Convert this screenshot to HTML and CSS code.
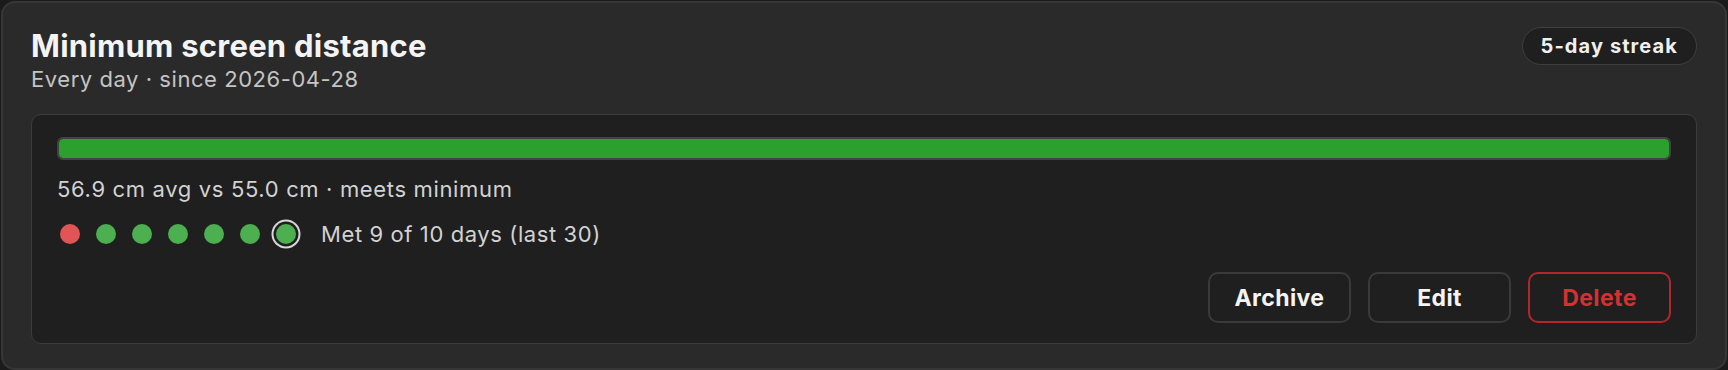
FILE: index.html
```html
<!DOCTYPE html>
<html lang="en">
<head>
  <meta charset="UTF-8">
  <meta name="viewport" content="width=device-width, initial-scale=1.0">
  <title>Goals - Minimum screen distance</title>
  <link rel="stylesheet" href="styles.css">
</head>

<body>
  <div class="goal-card">
    <div class="goal-head">
      <div class="goal-heading">
        <h2 class="goal-title">Minimum screen distance</h2>
        <p class="goal-meta">Every day · since 2026-04-28</p>
      </div>
      <span class="streak">5-day streak</span>
    </div>

    <div class="goal-panel">
      <div class="progress">
        <div class="progress-fill" style="width: 100%;"></div>
      </div>
      <p class="goal-stat">56.9 cm avg vs 55.0 cm · meets minimum</p>

      <div class="history">
        <span class="dot miss"></span>
        <span class="dot"></span>
        <span class="dot"></span>
        <span class="dot"></span>
        <span class="dot"></span>
        <span class="dot"></span>
        <span class="dot today"></span>
        <span class="history-label">Met 9 of 10 days (last 30)</span>
      </div>

      <div class="actions">
        <button class="btn">Archive</button>
        <button class="btn">Edit</button>
        <button class="btn btn-danger">Delete</button>
      </div>
    </div>
  </div>
</body>
</html>
```

FILE: styles.css
```css
body {
  font-family: "Inter", "Noto Sans", sans-serif;
  margin: 0;
  padding: 1px;
  background-color: #1b1b1b;
  color: #f2f2f2;
}

.goal-card {
  background-color: #2a2a2a;
  border: 2px solid #363636;
  border-radius: 14px;
  padding: 24px 28px 24px 28px;
}

.goal-head {
  display: flex;
  justify-content: space-between;
  align-items: flex-start;
  margin-bottom: 21px;
}

.goal-title {
  margin: 0;
  font-size: 31px;
  line-height: 38px;
  font-weight: 700;
  letter-spacing: 0.25px;
  color: #f4f4f4;
}

.goal-meta {
  margin: 0;
  font-size: 22px;
  line-height: 28px;
  color: #c4c4c4;
  letter-spacing: 0.55px;
}

.streak {
  display: inline-flex;
  align-items: center;
  height: 38px;
  box-sizing: border-box;
  padding: 0 18px;
  border: 1.5px solid #3e3e3e;
  border-radius: 19px;
  background-color: #1f1f1f;
  font-size: 20px;
  font-weight: 700;
  letter-spacing: 1.1px;
  color: #f0f0f0;
}

.goal-panel {
  background-color: #1f1f1f;
  border: 1px solid #3c3c3c;
  border-radius: 10px;
  padding: 22px 25px 20px 25px;
}

.progress {
  height: 23px;
  box-sizing: border-box;
  border: 2px solid #424242;
  border-radius: 6px;
  background-color: #2a2a2a;
  overflow: hidden;
}

.progress-fill {
  height: 100%;
  background-color: #2ca02c;
  border-radius: 4px;
}

.goal-stat {
  margin: 16px 0 0 0;
  font-size: 22px;
  line-height: 27px;
  letter-spacing: 0.65px;
  color: #d2d2d2;
}

.history {
  display: flex;
  align-items: center;
  gap: 16px;
  height: 28px;
  margin-top: 17px;
  padding-left: 3px;
}

.dot {
  width: 20px;
  height: 20px;
  border-radius: 50%;
  background-color: #4caf50;
  flex-shrink: 0;
}

.dot.miss {
  background-color: #e05555;
}

.dot.today {
  box-shadow: 0 0 0 2.5px #1f1f1f, 0 0 0 4.5px #d8d8d8;
}

.history-label {
  margin-left: 9px;
  font-size: 22px;
  letter-spacing: 0.6px;
  color: #d2d2d2;
}

.actions {
  display: flex;
  justify-content: flex-end;
  gap: 17px;
  margin-top: 24px;
}

.btn {
  width: 143px;
  height: 51px;
  border: 2px solid #3a3a3a;
  border-radius: 10px;
  background-color: #1f1f1f;
  color: #f4f4f4;
  font-family: inherit;
  font-size: 23px;
  font-weight: 700;
  letter-spacing: 0.4px;
  cursor: pointer;
}

.btn-danger {
  border-color: #b3262a;
  color: #d43131;
}
```
